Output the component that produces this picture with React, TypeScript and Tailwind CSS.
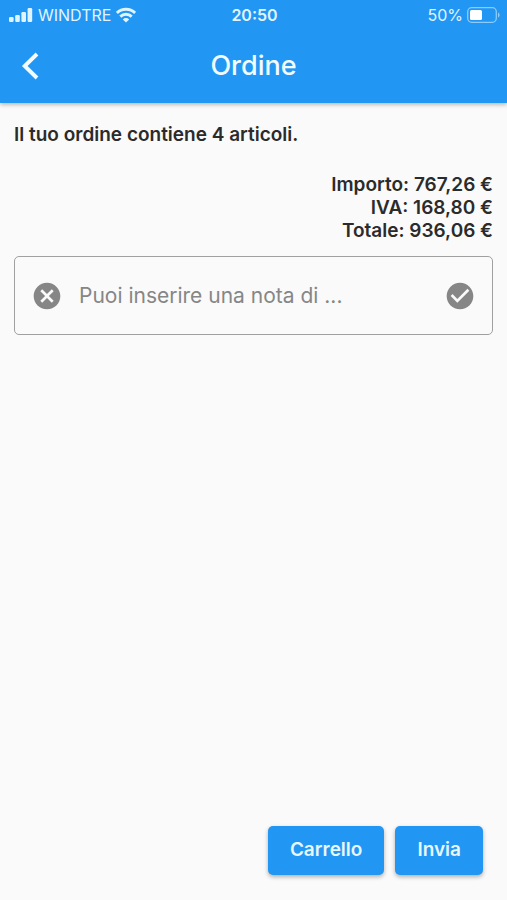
import { useState } from "react";
import { MdCancel, MdCheckCircle } from "react-icons/md";

const totals = [
  { label: "Importo", value: "767,26 €" },
  { label: "IVA", value: "168,80 €" },
  { label: "Totale", value: "936,06 €" },
];

function SignalIcon() {
  return (
    <svg width="24" height="16" viewBox="0 0 24 16" fill="currentColor" aria-hidden="true">
      <rect x="0" y="10" width="4.6" height="5" rx="1.2" />
      <rect x="6.200" y="8" width="4.600" height="7" rx="1.2" />
      <rect x="12.400" y="5" width="4.600" height="10" rx="1.2" />
      <rect x="18.600" y="1" width="4.600" height="14" rx="1.2" />
    </svg>
  );
}

function WifiIcon() {
  return (
    <svg width="20" height="16" viewBox="0 0 20 16" fill="none" stroke="currentColor" strokeWidth="2.9" aria-hidden="true">
      <path d="M0.9 5.900a13 13 0 0 1 18.200 0" />
      <path d="M4.300 9.600a8.200 8.200 0 0 1 11.400 0" />
      <path d="M10 15.600 6.800 12.400a4.600 4.600 0 0 1 6.400 0z" fill="currentColor" stroke="none" />
    </svg>
  );
}

function BatteryIcon() {
  return (
    <svg width="33" height="16" viewBox="0 0 33 16" fill="none" aria-hidden="true">
      <rect x="0.700" y="0.700" width="28.600" height="14.600" rx="4" stroke="#8ccbfb" strokeWidth="1.3" />
      <rect x="3" y="3" width="12" height="10" rx="1.5" fill="#fff" />
      <path d="M31 5.500v5c1-.4 1.600-1.400 1.600-2.500S32 5.900 31 5.500z" fill="#8ccbfb" />
    </svg>
  );
}

function StatusBar() {
  return (
    <div className="grid h-[29px] grid-cols-[1fr_auto_1fr] items-center pr-[7px] pl-[9px] text-[#e0f4ff]">
      <div className="flex items-center gap-[5px]">
        <SignalIcon />
        <span className="text-base">WINDTRE</span>
        <WifiIcon />
      </div>
      <span className="text-base font-semibold">20:50</span>
      <div className="flex items-center justify-end gap-1">
        <span className="text-base">50%</span>
        <BatteryIcon />
      </div>
    </div>
  );
}

export default function App() {
  const [note, setNote] = useState("");

  return (
    <div className="flex min-h-screen flex-col bg-[#fafafa] font-['Inter',sans-serif] text-[#2b2b2b]">
      <header className="bg-[#2196f3] shadow-[0_2px_4px_rgba(0,0,0,0.25)]">
        <StatusBar />
        <div className="grid h-[74px] grid-cols-[1fr_auto_1fr] items-center px-4 text-[#f2fbff]">
          <button type="button" aria-label="Indietro" className="flex size-8 items-center">
            <svg width="28" height="28" viewBox="0 0 28 28" fill="none" stroke="currentColor" strokeWidth="3.9" aria-hidden="true">
              <path d="M21 2 8.700 14 21 26" />
            </svg>
          </button>
          <h1 className="text-[27px] font-medium">Ordine</h1>
        </div>
      </header>

      <main className="flex flex-1 flex-col px-[14px] pt-5">
        <p className="text-[19px] leading-[23px] font-semibold">Il tuo ordine contiene 4 articoli.</p>

        <div className="mt-[27px] text-right text-[19px] leading-[23px] font-semibold">
          {totals.map((row) => (
            <p key={row.label}>
              {row.label}: {row.value}
            </p>
          ))}
        </div>

        <div className="mt-[14px] flex h-[79px] items-center rounded-[5px] border border-[#a0a0a0] px-4 text-[#868686]">
          <button type="button" aria-label="Cancella nota" onClick={() => setNote("")}>
            <MdCancel size={32} />
          </button>
          <input
            type="text"
            aria-label="Nota di ordine"
            value={note}
            onChange={(e) => setNote(e.target.value)}
            placeholder="Puoi inserire una nota di ..."
            className="min-w-0 flex-1 bg-transparent px-4 text-[21px] text-[#444] outline-none placeholder:text-[#868686]"
          />
          <button type="button" aria-label="Conferma nota">
            <MdCheckCircle size={32} />
          </button>
        </div>

        <div className="mt-auto flex justify-end gap-[11px] pr-[10px] pb-[25px]">
          <button
            type="button"
            className="h-[49px] rounded-[5px] bg-[#2196f3] px-[22px] text-[19px] font-semibold text-[#e6f7ff] shadow-[0_2px_4px_rgba(0,0,0,0.3)]"
          >
            Carrello
          </button>
          <button
            type="button"
            className="h-[49px] rounded-[5px] bg-[#2196f3] px-[22px] text-[19px] font-semibold text-[#e6f7ff] shadow-[0_2px_4px_rgba(0,0,0,0.3)]"
          >
            Invia
          </button>
        </div>
      </main>
    </div>
  );
}
